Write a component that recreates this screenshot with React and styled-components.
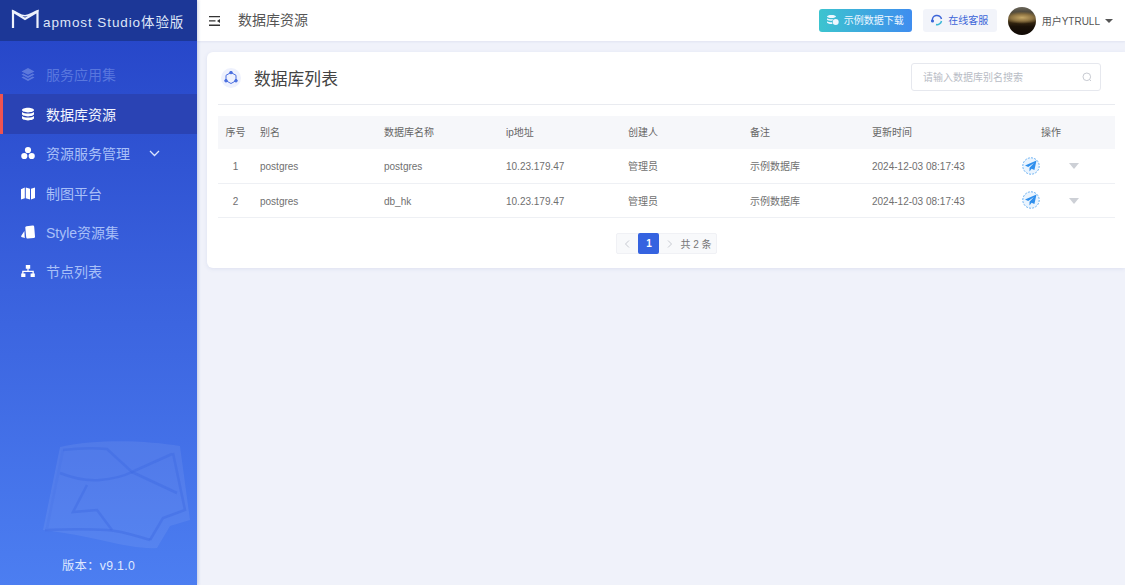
import React from 'react';
import styled, { createGlobalStyle } from 'styled-components';

const Global = createGlobalStyle`
  html, body { margin: 0; padding: 0; height: 100%; overflow: hidden; }
  body { font-family: "Liberation Sans", "Noto Sans CJK SC", sans-serif; background: #f0f2fa; }
  #root { height: 100%; }
  * { box-sizing: border-box; }
`;

const Page = styled.div`
  display: flex;
  width: 1125px;
  height: 585px;
  background: #f0f2fa;
`;

const Sidebar = styled.aside`
  position: relative;
  flex: 0 0 197px;
  display: flex;
  flex-direction: column;
  background: linear-gradient(180deg, #2443c6 0%, #3a62de 50%, #4c7ef1 100%);
  box-shadow: 1px 0 3px rgba(60, 80, 160, 0.25);
  overflow: hidden;
`;

const Brand = styled.div`
  height: 41px;
  flex: none;
  display: flex;
  align-items: flex-start;
  padding: 9px 0 0 11px;
  background: #1c3797;
  color: #dfe6f7;
`;

const BrandText = styled.span`
  font-size: 13.5px;
  letter-spacing: 0.9px;
  line-height: 16px;
  margin: 6px 0 0 4px;
  white-space: nowrap;
`;

const Menu = styled.nav`
  display: flex;
  flex-direction: column;
  padding-top: 14px;
`;

const Item = styled.div`
  height: ${p => (p.$active ? '40px' : '39.3px')};
  display: flex;
  align-items: center;
  padding-left: ${p => (p.$active ? '18px' : '21px')};
  padding-bottom: 1px;
  gap: 11px;
  font-size: 14px;
  color: ${p => (p.$active ? '#f2f5ff' : p.$dim ? 'rgba(150,175,245,0.45)' : '#a9c0f8')};
  background: ${p => (p.$active ? '#2a43b4' : 'transparent')};
  border-left: ${p => (p.$active ? '3px solid #ef5350' : 'none')};
`;

const ItemIcon = styled.svg`
  width: 14px;
  height: 14px;
  flex: none;
  fill: ${p => (p.$dim ? 'rgba(170,190,245,0.4)' : '#fff')};
`;

const Chevron = styled.svg`
  width: 11px;
  height: 7px;
  margin-left: 8px;
  fill: none;
  stroke: #dbe5ff;
  stroke-width: 1.3;
`;

const Watermark = styled.svg`
  position: absolute;
  left: 40px;
  top: 436px;
  width: 152px;
  height: 116px;
`;

const Version = styled.div`
  position: absolute;
  left: 0;
  right: 0;
  top: 557px;
  text-align: center;
  font-size: 12.3px;
  line-height: 18px;
  color: #dfe8ff;
  letter-spacing: 0.3px;
`;

const Main = styled.main`
  flex: 1;
  min-width: 0;
  display: flex;
  flex-direction: column;
`;

const Topbar = styled.header`
  height: 41px;
  flex: none;
  display: flex;
  align-items: center;
  padding: 0 12px 0 12px;
  background: #fff;
  box-shadow: 0 1px 2px rgba(90, 110, 170, 0.1);
`;

const MenuToggle = styled.svg`
  width: 11px;
  height: 10px;
  flex: none;
  fill: #333;
`;

const Crumb = styled.div`
  margin: -3px 0 0 18px;
  font-size: 14px;
  color: #555;
  flex: 1;
`;

const DownloadButton = styled.div`
  width: 93px;
  height: 23px;
  margin-top: -1px;
  padding-bottom: 1px;
  display: flex;
  align-items: center;
  justify-content: center;
  gap: 5px;
  border-radius: 3px;
  font-size: 10px;
  color: #eef7ff;
  background: linear-gradient(90deg, #3cc4cf 0%, #3f8def 100%);
`;

const ServiceButton = styled.div`
  width: 74px;
  height: 23px;
  margin: -1px 0 0 11px;
  padding-bottom: 1px;
  display: flex;
  align-items: center;
  justify-content: center;
  gap: 5px;
  border-radius: 3px;
  font-size: 10px;
  color: #3b64d8;
  background: #f2f4fa;
`;

const Avatar = styled.div`
  width: 28px;
  height: 28px;
  margin-left: 11px;
  border-radius: 50%;
  background: radial-gradient(ellipse 70% 22% at 50% 38%, #c5a868 0%, #8d7342 55%, transparent 100%),
    linear-gradient(180deg, #6b665a 0%, #3f3a2c 30%, #3a2a12 52%, #1a1108 70%, #100a05 100%);
`;

const UserName = styled.span`
  margin-left: 6px;
  font-size: 10px;
  color: #555;
`;

const Caret = styled.span`
  margin: 1px 0 0 5px;
  border-left: 4px solid transparent;
  border-right: 4px solid transparent;
  border-top: 4.5px solid #555;
`;

const Content = styled.div`
  padding: 11px 0 0 10px;
`;

const Card = styled.section`
  height: 216px;
  background: #fff;
  border-radius: 6px 0 0 6px;
  box-shadow: 0 1px 4px rgba(90, 110, 170, 0.12);
  padding: 0 10px 0 11px;
  display: flex;
  flex-direction: column;
`;

const CardHead = styled.div`
  height: 53px;
  flex: none;
  display: flex;
  align-items: center;
  border-bottom: 1px solid #e9ebf0;
`;

const HeadIconWrap = styled.div`
  width: 20px;
  height: 20px;
  margin-left: 3px;
  display: flex;
  align-items: center;
  justify-content: center;
  border-radius: 50%;
  background: #eef1fd;
`;

const CardTitle = styled.h1`
  margin: 0 0 1px 13px;
  font-size: 16.8px;
  font-weight: 400;
  color: #444;
  flex: 1;
`;

const Search = styled.div`
  width: 190px;
  height: 28px;
  margin: 0 14px 2px 0;
  padding: 0 8px 1px 11px;
  display: flex;
  align-items: center;
  justify-content: space-between;
  border: 1px solid #e6e8ee;
  border-radius: 3px;
  font-size: 10px;
  color: #b8bcc5;
`;

const Table = styled.div`
  margin-top: 11px;
  display: flex;
  flex-direction: column;
`;

const Row = styled.div`
  display: grid;
  grid-template-columns: 35px 124px repeat(5, 122px) 1fr;
  align-items: center;
  height: ${p => (p.$head ? '33px' : '34.5px')};
  padding-bottom: ${p => (p.$head ? '2px' : '0')};
  background: ${p => (p.$head ? '#f6f7fa' : '#fff')};
  border-bottom: ${p => (p.$head ? 'none' : '1px solid #eef0f4')};
  font-size: 10px;
  color: ${p => (p.$head ? '#666' : '#707070')};
`;

const Cell = styled.div`
  padding-left: ${p => (p.$center ? '0' : '7px')};
  padding-top: ${p => (p.$latin ? '2px' : '0')};
  text-align: ${p => (p.$center ? 'center' : 'left')};
  white-space: nowrap;
`;

const Actions = styled.div`
  display: flex;
  align-items: center;
  padding-left: 35px;
`;

const SendIcon = styled.svg`
  width: 18px;
  height: 18px;
  flex: none;
`;

const ActionCaret = styled.span`
  margin: 1px 0 0 29px;
  border-left: 5.5px solid transparent;
  border-right: 5.5px solid transparent;
  border-top: 6px solid #cdd0d6;
`;

const Pager = styled.div`
  align-self: center;
  margin-top: 15px;
  height: 21px;
  display: flex;
  align-items: center;
  background: #f8f9fb;
  border: 1px solid #f0f1f5;
  border-radius: 2px;
  font-size: 10px;
  color: #777;
`;

const PageArrow = styled.svg`
  width: 21px;
  height: 8px;
  fill: none;
  stroke: #c6c9d0;
  stroke-width: 1;
`;

const PageNumber = styled.div`
  width: 21px;
  height: 21px;
  display: flex;
  align-items: center;
  justify-content: center;
  border-radius: 2px;
  background: #3563e0;
  color: #fff;
  font-weight: 700;
`;

const PageTotal = styled.span`
  padding-right: 4px;
  white-space: nowrap;
`;

const rows = [
  ['1', 'postgres', 'postgres'],
  ['2', 'postgres', 'db_hk'],
];

const LayersGlyph = <path d="M7 1 13.500 4.400 7 7.800.5 4.400zM2.300 6.500 7 9l4.700-2.500 1.800 1L7 11 .5 7.500zM2.300 9.600 7 12.100l4.700-2.500 1.800 1L7 14 .5 10.600z" />;
const DbGlyph = (
  <path d="M7 .8c3.400 0 6 1 6 2.300S10.400 5.400 7 5.400 1 4.400 1 3.100 3.600.8 7 .8zM1 4.900C2.300 6 4.500 6.500 7 6.500s4.700-.5 6-1.600v2.200C13 8.400 10.400 9.400 7 9.400S1 8.400 1 7.100zM1 8.900c1.300 1.100 3.500 1.600 6 1.600s4.700-.5 6-1.600v2.200c0 1.300-2.600 2.300-6 2.300s-6-1-6-2.300z" />
);
const ServiceGlyph = (
  <>
    <circle cx="7" cy="4" r="3.100" />
    <circle cx="3.300" cy="10" r="3.100" />
    <circle cx="10.700" cy="10" r="3.100" />
  </>
);
const MapGlyph = <path d="M0 3.200 3.800 1.500v10.800L0 13.500zM4.800 1.500 9 2.800v10.700L4.800 12.300zM10 2.800l4-1.300v10.500L10 13.500z" />;
const StyleGlyph = (
  <>
    <path d="M5.500 1.300 11.600.5c.9-.1 1.500.4 1.600 1.200l.8 9.800c.1.800-.4 1.300-1.200 1.400l-6 .6c-.9.100-1.500-.4-1.600-1.200L4.300 2.700c-.1-.8.400-1.300 1.200-1.400z" />
    <path d="M3.400 6 3.700 11.800c0 .5.200 1 .4 1.300L1 12.300C.2 12 0 11.400.3 10.700z" />
  </>
);
const NodeGlyph = <path d="M4.800 1h4.400v3.700H7.600v2h5.200v2.700h1v3.600H9.600V9.400h1.900V8H2.500v1.400h1.900V13H.2V9.400h1V6.700h5.200v-2H4.800z" />;

export default function App() {
  return (
    <Page>
      <Global />
      <Sidebar>
        <Brand>
          <svg width="28" height="20" viewBox="0 0 28 20" fill="none" stroke="#eef2fc">
            <path d="M2 19V2.500L14 10 26.500 2.500V19" strokeWidth="2.200" />
            <path d="M1 1.500C6 3 9 6.800 14 6.800S22 3 27.500 1.500" strokeWidth="1.600" />
          </svg>
          <BrandText>apmost Studio体验版</BrandText>
        </Brand>
        <Menu>
          <Item $dim><ItemIcon $dim viewBox="0 0 14 14">{LayersGlyph}</ItemIcon>服务应用集</Item>
          <Item $active><ItemIcon viewBox="0 0 14 14">{DbGlyph}</ItemIcon>数据库资源</Item>
          <Item>
            <ItemIcon viewBox="0 0 14 14">{ServiceGlyph}</ItemIcon>资源服务管理
            <Chevron viewBox="0 0 11 7"><path d="M1 1l4.500 4.500L10 1" /></Chevron>
          </Item>
          <Item><ItemIcon viewBox="0 0 14 14">{MapGlyph}</ItemIcon>制图平台</Item>
          <Item><ItemIcon viewBox="0 0 14 14">{StyleGlyph}</ItemIcon>Style资源集</Item>
          <Item><ItemIcon viewBox="0 0 14 14">{NodeGlyph}</ItemIcon>节点列表</Item>
        </Menu>
        <Watermark viewBox="40 436 152 116">
          <path fill="#fff" fillOpacity="0.07" d="M60 447C100 438 150 441 180 446L190 520 170 526 157 548C130 550 90 535 43 530z" />
          <g fill="none" stroke="#3f6ce4" strokeOpacity="0.5" strokeWidth="2.500">
            <path d="M63 450C80 448 95 448 107 449L132 472 172 454" />
            <path d="M63 450 47 528" strokeOpacity="0.2" />
            <path d="M60 473C75 479 88 481 100 480S122 477 132 472" />
            <path d="M132 472 177 493" />
            <path d="M87 485 73 512 97 510 112 530" />
            <path d="M173 453 185 510 163 518 150 540" />
            <path d="M45 530C70 529 90 529 107 530S135 536 150 540" />
          </g>
        </Watermark>
        <Version>版本：v9.1.0</Version>
      </Sidebar>
      <Main>
        <Topbar>
          <MenuToggle viewBox="0 0 11 10">
            <path d="M0 0h11v1.300H0zM0 4.300h6.500v1.300H0zM0 8.600h11v1.300H0zM11 3v4L8 5z" />
          </MenuToggle>
          <Crumb>数据库资源</Crumb>
          <DownloadButton>
            <svg width="12" height="10" viewBox="0 0 12 10" fill="#eef7ff">
              <path d="M0 1.500C0 .6 2 0 4.500 0S9 .6 9 1.500 7 3 4.500 3 0 2.400 0 1.500zM0 3.300C1 4 2.700 4.300 4.500 4.300c.7 0 1.400 0 2-.2-.6.4-1 1-1.200 1.600H4.500C2.700 5.700 1 5.300 0 4.700zM0 6.300c1 .6 2.700 1 4.500 1h.6c0 .6.200 1.300.5 1.800h-1C2 9.100 0 8.500 0 7.600z" />
              <circle cx="8.700" cy="7" r="3" />
            </svg>
            示例数据下载
          </DownloadButton>
          <ServiceButton>
            <svg width="12" height="12" viewBox="0 0 12 12" fill="none" stroke="#3b64d8" strokeWidth="1.500">
              <path d="M1.500 7A4.500 4.500 0 0 1 10.500 5" />
              <path d="M10.500 7A4.500 4.500 0 0 1 5 10.500" stroke="#39b6d6" />
              <circle cx="1.500" cy="7" r=".8" />
            </svg>
            在线客服
          </ServiceButton>
          <Avatar />
          <UserName>用户YTRULL</UserName>
          <Caret />
        </Topbar>
        <Content>
          <Card>
            <CardHead>
              <HeadIconWrap>
                <svg width="14" height="14" viewBox="0 0 14 14" fill="none" stroke="#4a6fe0" strokeWidth="1">
                  <path d="M7 1.500 12 4.300v5.400L7 12.500 2 9.700V4.300z" />
                  <circle cx="7" cy="1.500" r="1.300" fill="#4a6fe0" />
                  <circle cx="2" cy="9.700" r="1.300" fill="#4a6fe0" />
                  <circle cx="12" cy="9.700" r="1.300" fill="#4a6fe0" />
                </svg>
              </HeadIconWrap>
              <CardTitle>数据库列表</CardTitle>
              <Search>
                请输入数据库别名搜索
                <svg width="10" height="10" viewBox="0 0 10 10" fill="none" stroke="#c8cbd2">
                  <circle cx="4.800" cy="4.800" r="3.800" />
                  <path d="M7.500 7.500 9 9" />
                </svg>
              </Search>
            </CardHead>
            <Table>
              <Row $head>
                <Cell $center>序号</Cell>
                <Cell>别名</Cell>
                <Cell>数据库名称</Cell>
                <Cell>ip地址</Cell>
                <Cell>创建人</Cell>
                <Cell>备注</Cell>
                <Cell>更新时间</Cell>
                <Cell $center>操作</Cell>
              </Row>
              {rows.map(r => (
                <Row key={r[0]}>
                  <Cell $center $latin>{r[0]}</Cell>
                  <Cell $latin>{r[1]}</Cell>
                  <Cell $latin>{r[2]}</Cell>
                  <Cell $latin>10.23.179.47</Cell>
                  <Cell>管理员</Cell>
                  <Cell>示例数据库</Cell>
                  <Cell $latin>2024-12-03 08:17:43</Cell>
                  <Actions>
                    <SendIcon viewBox="0 0 18 18">
                      <circle cx="9" cy="9" r="8.200" fill="#eaf4fe" stroke="#6db2f3" strokeWidth="1" strokeDasharray="2 1.200" />
                      <path d="M14.500 3.500 3 8.600l3.200 1.400L12 6 7.500 10.800V14.500l2.100-2.700 2.800 1.200z" fill="#2f8fed" />
                    </SendIcon>
                    <ActionCaret />
                  </Actions>
                </Row>
              ))}
            </Table>
            <Pager>
              <PageArrow viewBox="0 0 21 8"><path d="M12 .5 8.500 4 12 7.500" /></PageArrow>
              <PageNumber>1</PageNumber>
              <PageArrow viewBox="0 0 21 8"><path d="M9 .5 12.500 4 9 7.500" /></PageArrow>
              <PageTotal>共 2 条</PageTotal>
            </Pager>
          </Card>
        </Content>
      </Main>
    </Page>
  );
}
